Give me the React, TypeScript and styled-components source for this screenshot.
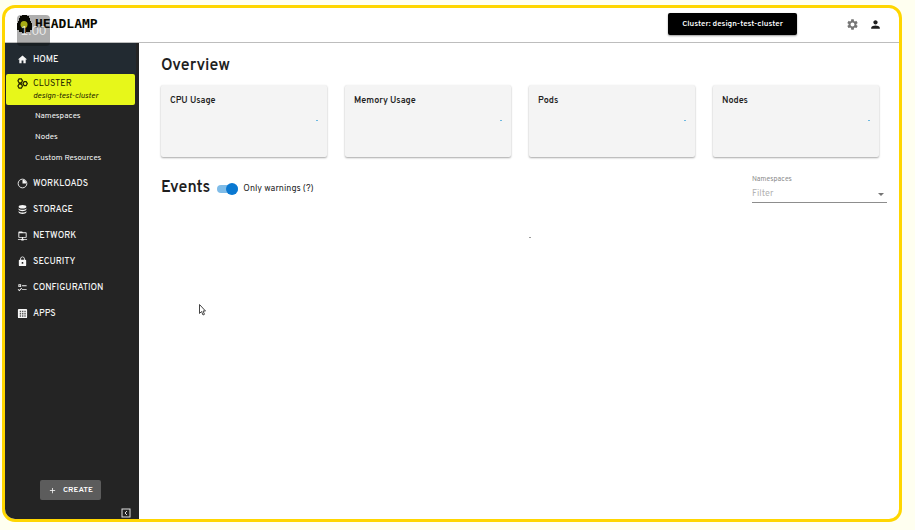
import React from "react";
import styled, { createGlobalStyle, css } from "styled-components";
import { MdAdd, MdHome, MdLock, MdPerson, MdSettings } from "react-icons/md";

const GlobalStyle = createGlobalStyle`
  *, *::before, *::after { box-sizing: border-box; }
  body {
    margin: 0;
    background: #fffff0;
    color: #1f1f1f;
    font-family: Overpass, Roboto, "Liberation Sans", sans-serif;
    font-size: 9px;
  }
  button, input { font: inherit; color: inherit; }
  h1, h2, h3, ul { margin: 0; padding: 0; }
  ul { list-style: none; }
`;

const Page = styled.div`
  display: flex;
  min-height: 100vh;
  padding: 5px 13px 8px 2px;
`;

const Frame = styled.div`
  flex: 1;
  display: flex;
  flex-direction: column;
  min-width: 0;
  overflow: hidden;
  background: #fff;
  border: 3px solid #ffd600;
  border-radius: 13px;
`;

const TopBar = styled.header`
  display: flex;
  align-items: center;
  height: 35px;
  padding: 0 17px 2px 12px;
  border-bottom: 1px solid #bdbdbd;
`;

const Brand = styled.a`
  position: relative;
  z-index: 1;
  display: flex;
  align-items: center;
  gap: 3px;
  color: #0a0a00;
  text-decoration: none;
  font: bold 13px/18px "DejaVu Sans Mono", monospace;
`;

const ZoomBadge = styled.span`
  position: absolute;
  top: 0;
  left: 0;
  width: 33px;
  height: 31px;
  border-radius: 4px;
  background: rgba(10, 10, 10, 0.33);
  color: rgba(255, 255, 255, 0.75);
  font: 13px/32px "Liberation Sans", sans-serif;
  text-align: center;
`;

const ClusterButton = styled.button`
  height: 22px;
  margin-left: auto;
  margin-right: 49px;
  padding: 0 14px 1px;
  border: 0;
  border-radius: 2px;
  background: #000;
  color: #fff;
  font-size: 8px;
  font-weight: 600;
  box-shadow: 0 1px 2px rgba(0, 0, 0, 0.4);
`;

const IconButton = styled.button<{ $color?: string }>`
  display: flex;
  padding: 0;
  border: 0;
  background: none;
  color: ${({ $color }) => $color ?? "#1f1f1f"};
  font-size: 13px;
  & + & { margin-left: 10px; }
`;

const Body = styled.div`
  flex: 1;
  display: flex;
`;

const Sidebar = styled.nav`
  flex: 0 0 134px;
  display: flex;
  flex-direction: column;
  background: #242424;
  color: #f5f5f5;
`;

const NavLink = styled.a<{ $state?: "hover" | "active" }>`
  display: flex;
  align-items: center;
  gap: 5px;
  height: 26px;
  padding-left: 12px;
  color: inherit;
  text-decoration: none;
  font-weight: 500;
  svg { width: 11px; height: 11px; flex: none; }
  ${({ $state }) => $state === "hover" && css`
    height: 31px;
    margin-right: 3px;
    padding-top: 2px;
    background: #222a31;
  `}
  ${({ $state }) => $state === "active" && css`
    align-items: flex-start;
    height: 31px;
    margin: 0 4px 0 1px;
    padding: 4px 0 0 11px;
    border-radius: 2px;
    background: #e7f71a;
    color: #242400;
    font-weight: 400;
    line-height: 12px;
  `}
`;

const Subtitle = styled.em`
  display: block;
  font-size: 8px;
`;

const SubList = styled.ul`
  padding-bottom: 2px;
`;

const SubLink = styled.a`
  display: flex;
  align-items: center;
  height: 21px;
  padding-left: 30px;
  color: inherit;
  text-decoration: none;
  font-size: 8px;
  font-weight: 400;
`;

const SidebarFooter = styled.div`
  display: flex;
  flex-direction: column;
  gap: 8px;
  margin-top: auto;
  padding: 0 8px 1px;
`;

const CreateButton = styled.button`
  align-self: center;
  display: flex;
  align-items: center;
  gap: 6px;
  height: 20px;
  padding: 0 8px;
  border: 0;
  border-radius: 2px;
  background: #5c5c5c;
  color: #fff;
  font-size: 8px;
  font-weight: 600;
  margin-right: 3px;
  svg { width: 9px; height: 9px; }
`;

const CollapseButton = styled(IconButton)`
  align-self: flex-end;
  svg { width: 10px; height: 10px; }
`;

const Main = styled.main`
  flex: 1;
  min-width: 0;
  padding: 13px 0 12px 22px;
`;

const Title = styled.h1`
  font-size: 16px;
  line-height: 20px;
  font-weight: 600;
`;

const Cards = styled.ul`
  display: grid;
  grid-template-columns: repeat(4, 1fr);
  gap: 18px;
  margin: 9px 20px 0 0;
`;

const Card = styled.li`
  display: flex;
  flex-direction: column;
  height: 72px;
  padding: 9px;
  border-radius: 2px;
  background: #f4f4f4;
  box-shadow: 0 1px 2px rgba(0, 0, 0, 0.35);
`;

const CardTitle = styled.h3`
  font-size: 9px;
  line-height: 14px;
  font-weight: 600;
`;

const Spinner = styled.span<{ $centered?: boolean }>`
  display: block;
  width: 2px;
  height: 1px;
  margin: ${({ $centered }) => ($centered ? "34px auto 0" : "12px 0 0 auto")};
  background: ${({ $centered }) => ($centered ? "#9a9a9a" : "#6cb8e0")};
`;

const EventsBar = styled.div`
  display: flex;
  align-items: flex-start;
  margin: 17px 12px 0 0;
`;

const EventsTitle = styled(Title)`
  padding-top: 4px;
`;

const SwitchLabel = styled.label`
  display: flex;
  align-items: center;
  gap: 5px;
  margin: 9px 0 0 7px;
`;

const Switch = styled.input`
  appearance: none;
  display: flex;
  align-items: center;
  justify-content: flex-start;
  width: 21px;
  height: 8px;
  margin: 0;
  border-radius: 4px;
  background: #bdbdbd;
  &::before {
    content: "";
    width: 12px;
    height: 12px;
    border-radius: 50%;
    background: #fafafa;
    flex: none;
  }
  &:checked { justify-content: flex-end; background: #7fbce8; }
  &:checked::before { background: #0a78d1; }
`;

const FilterField = styled.div`
  flex: 0 0 135px;
  margin-left: auto;
  color: #8d8d8d;
`;

const FilterLabel = styled.label`
  display: block;
  padding-top: 1px;
  font-size: 7px;
  line-height: 10px;
`;

const FilterControl = styled.div`
  display: flex;
  align-items: center;
  height: 18px;
  border-bottom: 1px solid #8d8d8d;
`;

const FilterInput = styled.input`
  flex: 1;
  min-width: 0;
  padding: 0;
  border: 0;
  outline: 0;
  background: none;
  &::placeholder { color: #b3b3b3; opacity: 1; }
`;

const Cursor = styled.svg`
  position: fixed;
  left: 199px;
  top: 304px;
  width: 7px;
  height: 12px;
  pointer-events: none;
`;

const Lamp = () => (
  <svg width="15" height="18" viewBox="0 0 15 18" aria-hidden="true">
    <path d="M5 0h5v1h2v2h1v3h1v2h1v7h-2v2H9v1H5v-1H2v-2H0V8h1V6h1V3h1V1h2z" fill="#0a0a00" />
    <circle cx="7" cy="9.500" r="3.500" fill="#f4fb1a" />
  </svg>
);

const Hexagons = () => (
  <svg viewBox="0 0 24 24" fill="none" stroke="currentColor" strokeWidth="2.600" aria-hidden="true">
    <path d="M4.500 2h5l2.500 4.200L9.500 10.500h-5L2 6.200zM4.500 13.500h5l2.500 4.200L9.500 22h-5L2 17.700zM15.500 8h4.500l2.500 4.200L20 16.500h-4.500L13 12.200z" />
  </svg>
);

const Slice = () => (
  <svg viewBox="0 0 24 24" aria-hidden="true">
    <circle cx="12" cy="12" r="9.500" fill="none" stroke="currentColor" strokeWidth="2" />
    <path d="M12 12V4a8 8 0 0 1 8 8z" fill="currentColor" />
  </svg>
);

const Database = () => (
  <svg viewBox="0 0 24 24" fill="currentColor" aria-hidden="true">
    <ellipse cx="12" cy="6" rx="8.500" ry="4" />
    <path d="M3.500 9c2 4.500 15 4.500 17 0v3c-1.500 5-15.500 5-17 0zM3.500 15c2 4.500 15 4.500 17 0v3c-1.500 5-15.500 5-17 0z" />
  </svg>
);

const Network = () => (
  <svg viewBox="0 0 24 24" fill="currentColor" aria-hidden="true">
    <path d="M3 15V5c0-1.100.9-2 2-2h6l2 2h6c1.100 0 2 .9 2 2v8c0 1.100-.9 2-2 2h-6v2h1c.6 0 1 .4 1 1h7v2h-7c0 .6-.4 1-1 1h-4c-.6 0-1-.4-1-1H2v-2h7c0-.6.400-1 1-1h1v-2H5c-1.100 0-2-.9-2-2m16 0V7H5v8z" />
  </svg>
);

const ListChecks = () => (
  <svg viewBox="0 0 24 24" fill="currentColor" aria-hidden="true">
    <path d="M3 5h6v6H3zm2 2v2h2V7zm6 0h10v2H11zm0 8h10v2H11zm-6 5-3.500-3.500 1.400-1.400L5 17.200l4.600-4.600L11 14z" />
  </svg>
);

const Apps = () => (
  <svg viewBox="0 0 24 24" aria-hidden="true">
    <rect x="2" y="2" width="20" height="20" rx="2" fill="currentColor" />
    <path d="M6 6h3v3H6zm5 0h3v3h-3zm5 0h3v3h-3zM6 11h3v3H6zm5 0h3v3h-3zm5 0h3v3h-3zM6 16h3v3H6zm5 0h3v3h-3zm5 0h3v3h-3z" fill="#555" />
  </svg>
);

const Collapse = () => (
  <svg viewBox="0 0 20 20" fill="none" stroke="#e0e0e0" strokeWidth="2" aria-hidden="true">
    <rect x="2" y="2" width="16" height="16" />
    <path d="M12 6l-4 4 4 4" />
  </svg>
);

const sections = [
  { name: "WORKLOADS", Icon: Slice },
  { name: "STORAGE", Icon: Database },
  { name: "NETWORK", Icon: Network },
  { name: "SECURITY", Icon: MdLock },
  { name: "CONFIGURATION", Icon: ListChecks },
  { name: "APPS", Icon: Apps },
];

export default function App() {
  return (
    <Page>
      <GlobalStyle />
      <Frame>
        <TopBar>
          <Brand href="#home">
            <Lamp />
            HEADLAMP
            <ZoomBadge>1.00</ZoomBadge>
          </Brand>
          <ClusterButton>Cluster: design-test-cluster</ClusterButton>
          <IconButton $color="#757575" aria-label="Settings"><MdSettings /></IconButton>
          <IconButton aria-label="Account"><MdPerson /></IconButton>
        </TopBar>
        <Body>
          <Sidebar>
            <NavLink href="#home" $state="hover"><MdHome />HOME</NavLink>
            <NavLink href="#cluster" $state="active">
              <Hexagons />
              <span>CLUSTER<Subtitle>design-test-cluster</Subtitle></span>
            </NavLink>
            <SubList>
              {["Namespaces", "Nodes", "Custom Resources"].map((name) => (
                <li key={name}><SubLink href="#cluster">{name}</SubLink></li>
              ))}
            </SubList>
            <ul>
              {sections.map(({ name, Icon }) => (
                <li key={name}><NavLink href={`#${name.toLowerCase()}`}><Icon />{name}</NavLink></li>
              ))}
            </ul>
            <SidebarFooter>
              <CreateButton><MdAdd />CREATE</CreateButton>
              <CollapseButton aria-label="Collapse sidebar"><Collapse /></CollapseButton>
            </SidebarFooter>
          </Sidebar>
          <Main>
            <Title>Overview</Title>
            <Cards>
              {["CPU Usage", "Memory Usage", "Pods", "Nodes"].map((name) => (
                <Card key={name}><CardTitle>{name}</CardTitle><Spinner /></Card>
              ))}
            </Cards>
            <EventsBar>
              <EventsTitle as="h2">Events</EventsTitle>
              <SwitchLabel><Switch type="checkbox" role="switch" defaultChecked />Only warnings (?)</SwitchLabel>
              <FilterField>
                <FilterLabel htmlFor="namespaces">Namespaces</FilterLabel>
                <FilterControl>
                  <FilterInput id="namespaces" placeholder="Filter" />
                  <IconButton $color="#757575" aria-label="Open namespaces">
                    <svg width="12" height="12" viewBox="0 0 12 12"><path d="M3 5h6L6 8z" fill="currentColor" /></svg>
                  </IconButton>
                </FilterControl>
              </FilterField>
            </EventsBar>
            <Spinner $centered />
          </Main>
        </Body>
      </Frame>
      <Cursor viewBox="0 0 7 12" aria-hidden="true">
        <path d="M.5.500v9l2-2 1.500 3.500 1.500-.7L4 7h2.500z" fill="#fff" stroke="#444" />
      </Cursor>
    </Page>
  );
}
